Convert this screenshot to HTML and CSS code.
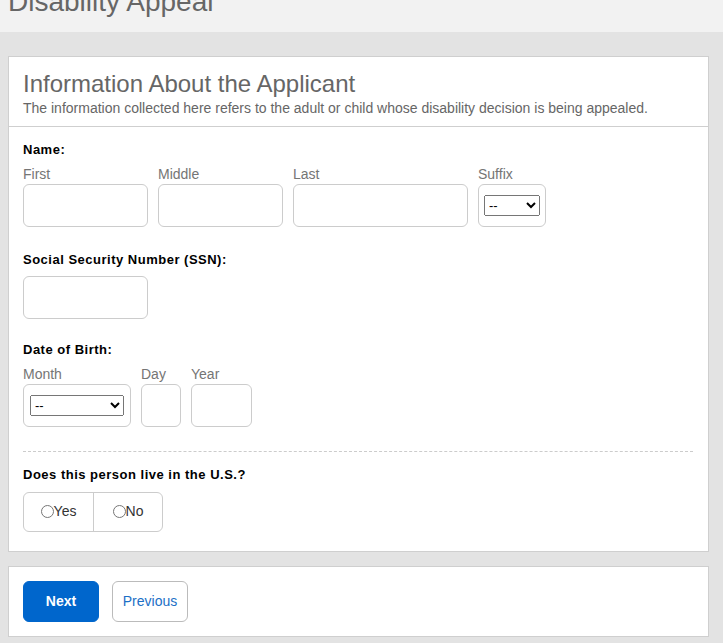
FILE: index.html
```html
<!DOCTYPE html>
<html lang="en">
<head>
<meta charset="utf-8">
<title>Disability Appeal</title>
<link rel="stylesheet" href="styles.css">
</head>
<body>
<header class="page-header">
  <h1 class="page-title">Disability Appeal</h1>
</header>
<main class="page-main">
  <section class="card">
    <div class="card-head">
      <h2 class="card-title">Information About the Applicant</h2>
      <p class="card-desc">The information collected here refers to the adult or child whose disability decision is being appealed.</p>
    </div>
    <div class="card-body">
      <div class="group group-name">
        <div class="group-label">Name:</div>
        <div class="field-row">
          <div class="field">
            <label class="sub-label" for="first">First</label>
            <input class="text-input w-125" id="first" type="text">
          </div>
          <div class="field">
            <label class="sub-label" for="middle">Middle</label>
            <input class="text-input w-125" id="middle" type="text">
          </div>
          <div class="field">
            <label class="sub-label" for="last">Last</label>
            <input class="text-input w-175" id="last" type="text">
          </div>
          <div class="field">
            <label class="sub-label" for="suffix">Suffix</label>
            <div class="select-box w-68">
              <select class="select w-56" id="suffix"><option>--</option></select>
            </div>
          </div>
        </div>
      </div>

      <div class="group group-ssn">
        <div class="group-label label-ssn">Social Security Number (SSN):</div>
        <input class="text-input w-125" type="text" aria-label="SSN">
      </div>

      <div class="group group-dob">
        <div class="group-label">Date of Birth:</div>
        <div class="field-row">
          <div class="field">
            <label class="sub-label" for="month">Month</label>
            <div class="select-box w-108">
              <select class="select w-94" id="month"><option>--</option></select>
            </div>
          </div>
          <div class="field">
            <label class="sub-label" for="day">Day</label>
            <input class="text-input w-40" id="day" type="text">
          </div>
          <div class="field">
            <label class="sub-label" for="year">Year</label>
            <input class="text-input w-61" id="year" type="text">
          </div>
        </div>
      </div>

      <hr class="dash">

      <div class="group group-us">
        <div class="group-label label-q">Does this person live in the U.S.?</div>
        <div class="radio-group">
          <label class="radio-cell"><input class="radio" type="radio" name="us">Yes</label>
          <label class="radio-cell"><input class="radio" type="radio" name="us">No</label>
        </div>
      </div>
    </div>
  </section>

  <section class="card card-actions">
    <button class="btn btn-primary" type="button">Next</button>
    <button class="btn btn-secondary" type="button">Previous</button>
  </section>
</main>
</body>
</html>
```

FILE: styles.css
```css
* {
  box-sizing: border-box;
}

html, body {
  margin: 0;
  padding: 0;
}

body {
  font-family: "Liberation Sans", Arial, sans-serif;
  background: #e3e3e3;
  color: #000;
  height: 643px;
  overflow: hidden;
}

.page-header {
  background: #f2f2f2;
  height: 32px;
  overflow: hidden;
  padding-left: 8px;
}

.page-title {
  margin: -14px 0 0 0;
  font-size: 28px;
  line-height: 32px;
  font-weight: normal;
  color: #666;
}

.page-main {
  padding: 24px 14px 0 8px;
}

.card {
  background: #fff;
  border: 1px solid #cfcfcf;
}

.card-head {
  padding: 13px 14px 9px 14px;
  border-bottom: 1px solid #cfcfcf;
}

.card-title {
  margin: 0;
  font-size: 24px;
  line-height: 28px;
  font-weight: normal;
  color: #666;
}

.card-desc {
  margin: 1px 0 0 0;
  font-size: 14px;
  line-height: 18px;
  color: #666;
}

.card-body {
  padding: 15px 15px 19px 14px;
}

.group-label {
  font-size: 13px;
  line-height: 16px;
  font-weight: bold;
  letter-spacing: 0.5px;
  margin-bottom: 7px;
}

.label-ssn {
  margin-bottom: 8px;
}

.label-q {
  margin-bottom: 9px;
}

.group-ssn {
  margin-top: 25px;
}

.group-dob {
  margin-top: 23px;
}

.field-row {
  display: flex;
  gap: 10px;
}

.field {
  display: flex;
  flex-direction: column;
}

.sub-label {
  font-size: 14px;
  line-height: 18px;
  color: #757575;
  margin-bottom: 1px;
}

.text-input {
  display: block;
  height: 43px;
  border: 1px solid #cccccc;
  border-radius: 6px;
  background: #fff;
  padding: 0 8px;
  font-family: inherit;
  font-size: 14px;
  margin: 0;
  outline: none;
}

.select-box {
  height: 43px;
  border: 1px solid #cccccc;
  border-radius: 6px;
  display: flex;
  align-items: center;
  justify-content: center;
}

.select {
  height: 21px;
  font-family: "Liberation Sans", Arial, sans-serif;
  font-size: 13px;
  margin: 0 0 1px 0;
}

.w-125 { width: 125px; }
.w-175 { width: 175px; }
.w-68 { width: 68px; }
.w-56 { width: 56px; }
.w-108 { width: 108px; }
.w-94 { width: 94px; }
.w-40 { width: 40px; }
.w-61 { width: 61px; }

.dash {
  margin: 24px 0 15px 0;
  border: 0;
  border-top: 1px dashed #cccccc;
  height: 0;
}

.radio-group {
  display: inline-flex;
  border: 1px solid #cccccc;
  border-radius: 6px;
  height: 40px;
}

.radio-cell {
  width: 69px;
  display: flex;
  align-items: center;
  justify-content: center;
  font-size: 14px;
  color: #333;
  padding-bottom: 2px;
}

.radio-cell + .radio-cell {
  border-left: 1px solid #cccccc;
}

.radio {
  margin: 0;
  width: 13px;
  height: 13px;
}

.card-actions {
  margin-top: 14px;
  padding: 14px;
  display: flex;
  gap: 13px;
}

.btn {
  width: 76px;
  height: 41px;
  border-radius: 6px;
  font-family: "Liberation Sans", Arial, sans-serif;
  font-size: 14px;
  cursor: pointer;
  padding: 0 0 1px 0;
}

.btn-primary {
  background: #0066cc;
  border: 1px solid #0066cc;
  color: #fff;
  font-weight: bold;
}

.btn-secondary {
  background: #fff;
  border: 1px solid #bbbbbb;
  color: #1c6fc6;
}
```
